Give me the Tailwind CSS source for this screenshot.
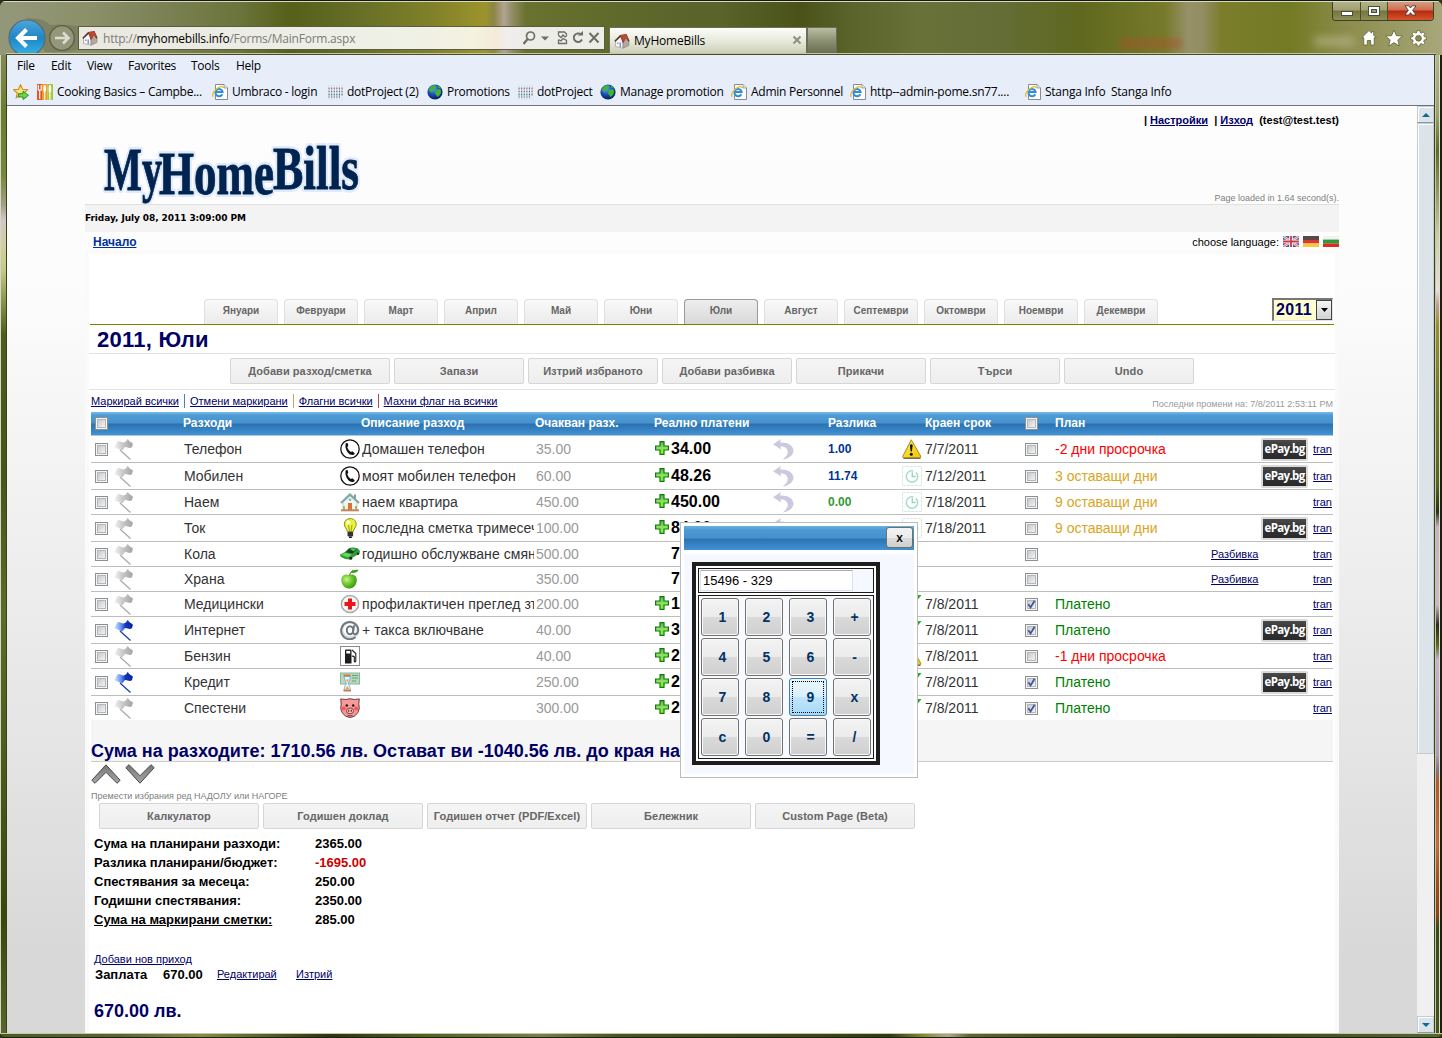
<!DOCTYPE html>
<html lang="bg">
<head>
<meta charset="utf-8">
<title>MyHomeBills</title>
<script src="https://cdn.jsdelivr.net/npm/@tailwindcss/browser@4"></script>
</head>
<body class="w-[1442px] h-[1038px] overflow-hidden bg-[#2c3310] font-['Liberation_Sans',Arial,sans-serif]">

<!-- shared icons -->
<svg class="absolute" width="0" height="0">
  <defs>
    <linearGradient id="gBack" x1="0" y1="0" x2="0" y2="1"><stop offset="0" stop-color="#4fa6dc"/><stop offset=".5" stop-color="#1f86c6"/><stop offset="1" stop-color="#37b4ea"/></linearGradient>
    <linearGradient id="gFlagGrey" x1="0" x2="1"><stop offset="0" stop-color="#f4f4f4"/><stop offset=".45" stop-color="#c9c9c9"/><stop offset="1" stop-color="#a2a2a2"/></linearGradient>
    <linearGradient id="gFlagBlue" x1="0" x2="1"><stop offset="0" stop-color="#dfe9ff"/><stop offset=".4" stop-color="#5c8af0"/><stop offset=".6" stop-color="#1238b8"/><stop offset="1" stop-color="#0a22a0"/></linearGradient>
    <linearGradient id="gBox" x1="0" y1="0" x2="1" y2="1"><stop offset="0" stop-color="#c3c7cc"/><stop offset="1" stop-color="#f6f6f6"/></linearGradient>
    <linearGradient id="gPlus" x1="0" y1="0" x2="0" y2="1"><stop offset="0" stop-color="#5fae50"/><stop offset=".5" stop-color="#8fe060"/><stop offset="1" stop-color="#7dfa18"/></linearGradient>
    <linearGradient id="gWarn" x1="0" y1="0" x2="1" y2="1"><stop offset="0" stop-color="#ffec50"/><stop offset="1" stop-color="#f2c500"/></linearGradient>
    <radialGradient id="gGlobe" cx=".4" cy=".3" r=".7"><stop offset="0" stop-color="#5aa6f0"/><stop offset=".6" stop-color="#1546a8"/><stop offset="1" stop-color="#071d5a"/></radialGradient>
    <radialGradient id="gApple" cx=".35" cy=".35" r=".7"><stop offset="0" stop-color="#c8f58a"/><stop offset=".5" stop-color="#6cc92c"/><stop offset="1" stop-color="#3a9413"/></radialGradient>
    <linearGradient id="gArrow" x1="0" y1="0" x2="0" y2="1"><stop offset="0" stop-color="#777"/><stop offset="1" stop-color="#a5a5a5"/></linearGradient>
  </defs>
  <symbol id="cb" viewBox="0 0 13 13"><rect x=".5" y=".5" width="12" height="12" fill="#f4f4f4" stroke="#8e8f8f"/><rect x="2.5" y="2.5" width="8" height="8" fill="url(#gBox)" stroke="#b4b8bd"/></symbol>
  <symbol id="cbOn" viewBox="0 0 13 13"><rect x=".5" y=".5" width="12" height="12" fill="#f4f4f4" stroke="#8e8f8f"/><rect x="2.5" y="2.5" width="8" height="8" fill="url(#gBox)" stroke="#b4b8bd"/><path d="M3.4 6.2 5.6 9.4 9.6 2.8" fill="none" stroke="#3f569c" stroke-width="1.8"/></symbol>
  <symbol id="flagGrey" viewBox="0 0 21 21"><path d="M7 11 17.5 20.5" stroke="#aaa" stroke-width="1.3"/><path d="M1 8 C3 7 3 2 6 2 C9 3 10 4 12 3 C14 2 14 0 15 0 C16 3 19 3 20 5 C19 6 20 9 17 9 C14 9 13 7 11 9 C10 12 8 12 6 10 C4 9 3 9 1 8Z" fill="url(#gFlagGrey)"/></symbol>
  <symbol id="flagBlue" viewBox="0 0 21 21"><path d="M7 11 17.5 20.5" stroke="#1c3fae" stroke-width="1.3"/><path d="M1 8 C3 7 3 2 6 2 C9 3 10 4 12 3 C14 2 14 0 15 0 C16 3 19 3 20 5 C19 6 20 9 17 9 C14 9 13 7 11 9 C10 12 8 12 6 10 C4 9 3 9 1 8Z" fill="url(#gFlagBlue)"/></symbol>
  <symbol id="plus" viewBox="0 0 14 14"><path d="M5 .6h4v4.4h4.4v4h-4.4v4.4h-4v-4.4h-4.4v-4h4.4z" fill="url(#gPlus)" stroke="#0f7a14" stroke-width="1.2"/></symbol>
  <symbol id="undo" viewBox="0 0 21 21"><path d="M0 5.2 8 0 7 3.6 C15 3.2 20 6.500 20.500 11.500 C20.500 16 15.500 20 9.500 20.500 C13.500 17.500 15.500 14.500 14.500 11.500 C13.500 8.500 11 7.500 7.500 7.300 L8.200 10.500Z" fill="#cbc9de"/></symbol>
  <symbol id="warn" viewBox="0 0 20 20"><path d="M9.300 .8 L18.700 17.200 Q19.200 18.800 17.500 18.800 L1.800 18.800 Q.3 18.800 .8 17.200Z" fill="url(#gWarn)" stroke="#a38a1a" stroke-width="1"/><path d="M1.500 19.300 H18.500" stroke="#5a5740" stroke-width="1"/><path d="M7.900 6 Q9.300 4.600 10.700 6 L9.900 12.500 H8.700Z" fill="#111"/><circle cx="9.300" cy="15.200" r="1.500" fill="#111"/></symbol>
  <symbol id="clock" viewBox="0 0 21 21"><rect x=".5" y=".5" width="20" height="20" fill="#fff" stroke="#cfe9de" stroke-dasharray="3 1"/><circle cx="10.500" cy="11" r="6" fill="none" stroke="#a8dcc6" stroke-width="1.600" stroke-dasharray="29 3"/><path d="M10.800 6.500V11H14.500" fill="none" stroke="#9ad6bd" stroke-width="1.500"/></symbol>
  <symbol id="tick" viewBox="0 0 21 21"><path d="M2 11 L7 18 L20.500 1 L17 1 L7.500 12 L5 9Z" fill="#1db32a"/></symbol>
  <symbol id="phone" viewBox="0 0 20 20"><circle cx="10" cy="10" r="9.200" fill="#fff" stroke="#111" stroke-width="1.300"/><path d="M5.600 4.600 Q6.500 3.400 7.800 4.200 L8.300 6.900 L7.200 8 Q8 11 10.800 12.900 L12.300 12.300 L14.700 14.200 Q14.700 15.800 13 16 Q9 16.200 6.500 11.500 Q4.800 7.500 5.600 4.600Z" fill="#111"/></symbol>
  <symbol id="house" viewBox="0 0 20 20"><path d="M3 10 10 4 17 10V18.500H3Z" fill="#f3f4f0" stroke="#a9b6b0" stroke-width=".6"/><path d="M1 11 10 2.500 19 11" fill="none" stroke="#74aaa2" stroke-width="2"/><rect x="14" y="2.500" width="2" height="4" fill="#89a"/><rect x="8" y="11" width="4" height="7.500" fill="#d8733a"/><circle cx="10" cy="7.800" r="1.300" fill="#7fb0c8"/><rect x="1" y="17.300" width="18" height="2" fill="#c8825a"/><path d="M4 14v4M16 14v4" stroke="#88b060" stroke-width="1.600"/></symbol>
  <symbol id="bulb" viewBox="0 0 20 20"><path d="M10.200 .6 C14 .6 16.200 3.200 16.200 6.200 C16.200 9.500 13.600 10.500 13.200 13.800 H7.400 C7 10.500 4.300 9.500 4.300 6.200 C4.300 3.200 6.600 .6 10.200 .6Z" fill="#e8f53a" stroke="#85931a" stroke-width="1"/><ellipse cx="8.200" cy="4.500" rx="2" ry="2.200" fill="#fbffc0"/><path d="M8.500 7 L9.500 13 M12 7 L11 13" stroke="#8f8c10" stroke-width=".8"/><rect x="7.500" y="13.800" width="5.600" height="4.600" rx="1" fill="#333"/><path d="M9 19.300h2.800" stroke="#111" stroke-width="1.400"/></symbol>
  <symbol id="car" viewBox="0 0 20 20"><path d="M0 10.500 L5 8 L9 4 Q14 3 18 4.500 L20 7 L19.500 9.500 L9.500 15.500 Q4 15.500 .5 12.500Z" fill="#2f9e38"/><path d="M5.500 8.300 L9.300 4.800 Q13 4 17 5 L12.500 9.800Z" fill="#174a22"/><path d="M1 10.700 L5.500 8.700 L12 10.500 L8 13.200Z" fill="#68d860"/><path d="M10 4.900 Q13 4.300 16 5 L13.700 7.200Z" fill="#63c968"/><circle cx="10.800" cy="14.200" r="1.500" fill="#222"/><circle cx="18" cy="9.700" r="1.200" fill="#222"/></symbol>
  <symbol id="apple" viewBox="0 0 20 20"><path d="M9 6 C12 4.500 16.800 5.800 16.800 11 C16.800 16 13 20 9.300 19.500 C5 20 1.300 15.500 1.300 11 C1.300 6 6 4.500 9 6Z" fill="url(#gApple)"/><path d="M9.500 6.500 Q10 3 13 1.200" fill="none" stroke="#5d7a1c" stroke-width="1"/><path d="M11 4 Q12 0 18.500 .8 Q17 4.500 11 4Z" fill="#3f9e22"/></symbol>
  <symbol id="med" viewBox="0 0 20 20"><circle cx="10" cy="10" r="8.600" fill="#f5f5f5" stroke="#a9a9a9" stroke-width="1.500"/><path d="M8 4.500h4v3.500h3.500v4h-3.500v3.500h-4v-3.500h-3.500v-4h3.500z" fill="#e8171c"/></symbol>
  <symbol id="at" viewBox="0 0 20 20"><g fill="none" stroke-linecap="round"><circle cx="9.800" cy="10" r="8" stroke="#d5d8db" stroke-width="3"/><path d="M15 17.500 A8.600 8.600 0 1 1 18.300 9.800 C18.300 13 16.500 14.300 14.600 14.200 C12.900 14 13 12.500 13.200 11 L14 6" stroke="#6f767d" stroke-width="1.900"/><ellipse cx="10" cy="10.300" rx="3.200" ry="4" stroke="#6f767d" stroke-width="2"/></g></symbol>
  <symbol id="fuel" viewBox="0 0 20 20"><rect x=".5" y=".5" width="19" height="19" fill="#fff" stroke="#8b8b8b"/><path d="M5 4.500Q5 3.500 6 3.500H10.500Q11.500 3.500 11.500 4.500V17.500H5Z" fill="#1d1d1d"/><rect x="6.300" y="4.900" width="3.900" height="2.600" fill="#fff"/><path d="M12 4 L15.800 7.500 V15 Q15.500 16.500 14.300 15.500 V11 Q14 10 12 10.200" fill="none" stroke="#1d1d1d" stroke-width="1.100"/></symbol>
  <symbol id="credit" viewBox="0 0 20 20"><rect x=".5" y="1" width="19" height="11" fill="#b5d9bf" stroke="#86b896"/><path d="M12 3.500h6M12 6h6M12 9h4" stroke="#6b9d7c" stroke-width="1"/><path d="M3.500 3.500H10.500M3.500 18.500H11" stroke="#d9763c" stroke-width="1.800"/><path d="M4.300 4.500 C4.300 9 6.300 10 6.300 11.200 C6.300 12.500 4.300 13.500 4.300 18 H10.200 C10.200 13.500 8.200 12.500 8.200 11.200 C8.200 10 10.200 9 10.200 4.500Z" fill="#eef5fb" stroke="#6f9cc8" stroke-width=".8"/><path d="M5 17.500 L7.200 14 L9.600 17.500Z M5.600 7.500H9L7.300 10Z" fill="#f0a63c"/></symbol>
  <symbol id="pig" viewBox="0 0 20 20"><path d="M.7 .9 L5.500 1.500 Q10 0 14.500 1.500 L19.300 .9 L18.800 6 Q20.300 11 17.800 14.800 Q14.500 19.500 10 19.500 Q5.500 19.500 2.200 14.800 Q-.3 11 1.200 6Z" fill="#f89a9a" stroke="#5e2c2c" stroke-width=".9"/><circle cx="6.800" cy="7.500" r="1.300" fill="#331515"/><circle cx="13.200" cy="7.500" r="1.300" fill="#331515"/><circle cx="3.800" cy="10.500" r="1.900" fill="#f2565a"/><circle cx="16.200" cy="10.500" r="1.900" fill="#f2565a"/><rect x="6.500" y="10.200" width="7" height="5.400" rx="2.500" fill="#fbb7b5" stroke="#6e2e2e" stroke-width=".8"/><path d="M8.700 11.800v2M11.300 11.800v2" stroke="#5e2323" stroke-width="1.100"/><path d="M7.500 17.300Q10 18.300 12.500 17.300" fill="none" stroke="#6e2e2e" stroke-width=".8"/></symbol>
  <symbol id="ie" viewBox="0 0 16 16"><path d="M3.500 .5H12l3.500 3.500V15.500H3.500Z" fill="#fff" stroke="#8a8a8a"/><path d="M12 .5V4H15.500" fill="#e8e8e8" stroke="#8a8a8a" stroke-width=".8"/><path d="M10.300 10.200 A3.600 3.600 0 1 1 10.600 7.900 H4" fill="none" stroke="#2c8fd8" stroke-width="2"/><path d="M1.200 12.800 C-.8 10.500 3 4.500 8 2.800 C10 2.200 11 2.800 10.900 4" fill="none" stroke="#e9b82d" stroke-width="1.300"/></symbol>
  <symbol id="globe" viewBox="0 0 16 16"><circle cx="8" cy="8" r="7.600" fill="url(#gGlobe)"/><path d="M4.500 2 Q8 .8 9.500 2.500 L8 5 L5.500 6 L4.500 8.500 L2 6.500 Q2 3.500 4.500 2Z M9 6 L13 5 Q15 7.500 13 11 L10.500 13 Q9 10.500 8 9.500Z M11 1.800 Q13.500 3 14 4.500 L11.500 4Z" fill="#3fb435"/></symbol>
  <symbol id="dots" viewBox="0 0 16 16"><g stroke-width="1.100" fill="none" stroke-dasharray="1.100 1.500"><path d="M.5 2H16" stroke="#cfcfcf"/><path d="M.5 4.500H16" stroke="#777" stroke-width="2"/><path d="M.5 7.500H16" stroke="#7d4a60" stroke-width="1.500"/><path d="M.5 10.500H16" stroke="#3f7a60" stroke-width="2"/><path d="M.5 13H12" stroke="#444" stroke-width="1.200"/><path d="M.5 15H16" stroke="#d5d5d5"/></g></symbol>
  <symbol id="home" viewBox="0 0 16 16"><path d="M1.500 7.500 L7 3.500 L9 10 L9 15.200 L1.500 13.500Z" fill="#f7f7fa" stroke="#8b8b9a" stroke-width=".6"/><path d="M9 15.200 V9.500 L12 5.500 L15 9 V12.500Z" fill="#b9a59a" stroke="#77706c" stroke-width=".5"/><path d="M.3 7.800 L6 2 L12.500 1 L15.700 8.200 L14.300 8.600 L12 5 L9 10.200 L6.600 4 L1.300 9Z" fill="#5a3a34"/><path d="M6.300 2.500 L12.300 1.300 L15 7 L12 4.800 L9.300 9Z" fill="#c3452e"/><path d="M3 9.500h1.500v1.500H3zM5.500 9.500h1.500v4.500H5.500z" fill="#8c93b8"/></symbol>
</svg>

<div class="relative flex h-[1038px] w-[1442px] flex-col">

  <!-- title bar -->
  <header class="relative flex h-[55px] w-full overflow-hidden rounded-t-[6px] border-t border-[#14170a] bg-[linear-gradient(90deg,#94987b_0px,#8b9069_90px,#7c8255_160px,#6b743a_240px,#566019_290px,#646c26_350px,#7f8029_430px,#9c932c_485px,#8d8545_494px,#b3a392_504px,#8f8a60_513px,#69722e_526px,#5f692b_620px,#59632a_720px,#4a5217_800px,#59632a_850px,#687138_920px,#646d35_1000px,#5f681e_1080px,#777a2b_1165px,#979169_1188px,#938d62_1202px,#7b7d2b_1222px,#737a24_1290px,#8d8d4e_1350px,#a7a77a_1442px)]">
    <div class="absolute inset-x-0 top-0 h-px bg-[#d9dcc4]"></div>
    <svg class="mt-[17px] ml-[6px] h-[37px] w-[72px] shrink-0" viewBox="6 18 72 37"><path d="M26 18 Q45 18 50 25 Q58 24 70 25 L78 26 V50 L66 52 H45Z" fill="#6f7356" fill-opacity=".55"/><circle cx="27" cy="38" r="18" fill="url(#gBack)" stroke="#586c72" stroke-width="1.200"/><path d="M37 38H19M26.500 29.500 18 38 26.500 46.500" fill="none" stroke="#fff" stroke-width="4"/><circle cx="62" cy="38" r="12.300" fill="#9c9f83" fill-opacity=".75" stroke="#5b5e45" stroke-width="1.300"/><path d="M55 38H68M63 32.500 68.500 38 63 43.500" fill="none" stroke="#dcddd0" stroke-width="2.600"/></svg>
    <div class="mt-[25px] flex h-[24px] w-[527px] shrink-0 items-center border border-[#5a5d44] bg-[linear-gradient(90deg,#e9e9e2_0px,#eff0e6_330px,#f4f2e0_395px,#f5ead9_418px,#f1eeee_428px,#ecede6_450px,#ecede6_527px)] pl-[3px]">
      <svg class="size-4"><use href="#home"/></svg>
      <span class="mt-[2px] ml-[5px] w-[420px] font-['Open_Sans',sans-serif] text-[12px] leading-4 tracking-[-0.23px] whitespace-nowrap text-[#7c7c78]">http://<span class="text-black">myhomebills.info</span>/Forms/MainForm.aspx</span>
      <svg class="h-4 w-[80px]" viewBox="0 0 80 16" fill="none" stroke="#6d6e69" stroke-width="1.700"><circle cx="7.500" cy="6" r="4"/><path d="M4.600 9 .5 14" stroke-width="2.200"/><path d="M18 6.500H26L22 10.500Z" fill="#6d6e69" stroke="none"/><path d="M35.500 5.500V2H41.500L43.500 4V6M35.500 5.500 38 7.500 40 5 42 7 43.500 6M35.500 10V13.500H43.500V10.500L40 8.500 38 11 35.500 9.500" stroke-width="1.300"/><path d="M58 4.500A4.300 4.300 0 1 0 59 9.500" stroke-width="1.900"/><path d="M54.500 5.500H60V1Z" fill="#6d6e69" stroke="none"/><path d="M66.500 3 75.500 12.500M75.500 3 66.500 12.500" stroke-width="2"/></svg>
    </div>
    <div class="mt-[26px] ml-[4px] flex h-[28px] w-[198px] shrink-0 items-center border border-b-0 border-[#6b6e58] bg-[linear-gradient(180deg,#fdfdfa,#e4e6d6_55%,#c6cab0)] pl-[4px]">
      <svg class="-mt-px size-4"><use href="#home"/></svg>
      <span class="-mt-px ml-[4px] w-[160px] font-['Open_Sans',sans-serif] text-[12px] leading-4 tracking-[-0.2px] text-black">MyHomeBills</span>
      <svg class="-mt-[3px] -ml-[2px] size-[10px]" viewBox="0 0 10 10"><path d="M1.500 1.500 8.500 8.500M8.500 1.500 1.500 8.500" stroke="#8d8f84" stroke-width="2"/></svg>
    </div>
    <div class="mt-[26px] h-[28px] w-[30px] shrink-0 border border-b-0 border-[#6b6e58] bg-[linear-gradient(180deg,#b9bda3,#8a8e70_50%,#666a4c)]"></div>
    <div class="ml-auto flex flex-col items-end pr-[8px]">
      <div class="flex h-[20px] w-[102px] overflow-hidden rounded-b-[4px] border border-t-0 border-[#3f4222]">
        <div class="flex w-[28px] items-center justify-center border-r border-[#4b4d30] bg-[linear-gradient(180deg,#b5b58c,#a0a070_48%,#75763c_52%,#8e8e58)]"><div class="mt-[5px] h-[5px] w-[12px] border border-[#4a4c40] bg-white"></div></div>
        <div class="flex w-[27px] items-center justify-center border-r border-[#4b4d30] bg-[linear-gradient(180deg,#b5b58c,#a0a070_48%,#75763c_52%,#8e8e58)]"><svg class="h-[10px] w-[12px]" viewBox="0 0 12 10"><rect x=".5" y=".5" width="11" height="9" fill="#fff" stroke="#4a4c40"/><rect x="3.500" y="3.500" width="5" height="3" fill="#999a70" stroke="#4a4c40"/></svg></div>
        <div class="flex flex-1 items-center justify-center bg-[linear-gradient(180deg,#d9a087,#cc6d50_48%,#b5290e_52%,#d4552c)]"><svg class="h-[11px] w-[13px]" viewBox="0 0 13 11"><path d="M1 .8H4.700L6.500 3 8.300 .8H12L8.700 5.300 12 10H8.300L6.500 7.700 4.700 10H1L4.300 5.300Z" fill="#fff" stroke="#4b3a3a" stroke-width=".9"/></svg></div>
      </div>
      <svg class="mt-[8px] mr-[7px] h-[18px] w-[66px]" viewBox="0 0 66 18" fill="#fff" stroke="#555828" stroke-width=".7"><path d="M8 1.500 0.800 8.700H2.800V16H6.300V11.500H9.700V16H13.200V8.700H15.200L12.700 6.200V2.500H10.700V4.200Z"/><path d="M33 1 35.400 6.700 41.500 7 36.800 10.900 38.300 17 33 13.600 27.700 17 29.200 10.900 24.500 7 30.600 6.700Z"/><path d="M56.200 1.500h2.600l.3 2 1.300.6 1.700-1.200 1.800 1.800-1.200 1.700.6 1.300 2 .3v2.600l-2 .3-.6 1.300 1.200 1.700-1.800 1.800-1.700-1.200-1.300.6-.3 2h-2.600l-.3-2-1.300-.6-1.700 1.200-1.800-1.800 1.200-1.700-.6-1.300-2-.3V8l2-.3.6-1.300-1.200-1.700 1.800-1.800 1.700 1.200 1.300-.6Z"/><circle cx="57.500" cy="9.300" r="2.900" fill="#8b8c50"/></svg>
    </div>
    <div class="absolute inset-x-[6px] bottom-0 h-px bg-[#474c22]"></div>
    <div class="absolute inset-x-[6px] bottom-px h-px bg-[#c3c6a6]"></div>
    <div class="absolute top-[38px] left-[1120px] h-[9px] w-[62px] bg-[#b0502c]/50 blur-[3px]"></div>
    <div class="absolute top-[36px] left-[1314px] h-[9px] w-[40px] bg-[#cfc9a8]/50 blur-[4px]"></div>
  </header>

  <div class="flex h-[978px] w-full">
    <!-- left glass edge -->
    <div class="flex w-[7px] shrink-0 border-l border-[#d5d8c0] bg-[linear-gradient(180deg,#838a58_0px,#6c7c30_60px,#77863e_120px,#a3a085_150px,#d5c6c8_165px,#d3cfa0_190px,#c5c98a_215px,#8b9650_245px,#4d5c1f_280px,#46551b_420px,#5d6b2a_560px,#4a5a1d_720px,#39470f_860px,#58652c_978px)]"><div class="ml-auto w-px bg-[#3a4218]"></div></div>

    <!-- client area -->
    <div class="flex w-[1427px] shrink-0 flex-col">
      <div class="h-[51px] border-b border-[#6f7278] bg-[#e7eefa] font-['Open_Sans',sans-serif] text-[12px] leading-[22px] whitespace-nowrap text-black">
        <nav class="flex h-[23px] pl-[10px] tracking-[-0.3px]">
          <span class="w-[34px]">File</span><span class="w-[36px]">Edit</span><span class="w-[41px]">View</span><span class="w-[63px]">Favorites</span><span class="w-[45px]">Tools</span><span>Help</span>
        </nav>
        <nav class="flex h-[27px] items-center pl-[6px] tracking-[-0.25px]">
          <span class="w-[24px]"><svg class="size-4" viewBox="0 0 16 16"><path d="M7.500 .8 9.600 5.300 14.500 5.800 10.900 9 11.900 13.800 7.500 11.400 3.200 13.800 4.200 9 .6 5.800 5.500 5.300Z" fill="#fbe27a" stroke="#c88d1b" stroke-width="1.100"/><path d="M5.500 9.700H10V7.200L15.500 11.300 10 15.500V13H5.500Z" fill="#6fd44c" stroke="#1f8a1c" stroke-width=".9"/></svg></span>
          <span class="flex w-[175px] items-center"><svg class="mr-[4px] size-4 shrink-0" viewBox="0 0 16 16"><rect width="5" height="16" fill="#e2552b"/><rect x="5" width="5.500" height="16" fill="#f59a1e"/><rect x="10.500" width="5.500" height="16" fill="#a7c83c"/><path d="M1.300 1v5h2.900V1M2.700 6v9M7.700 16V8M12.900 16V9" stroke="#fff" stroke-width="1.200" fill="none"/><ellipse cx="7.700" cy="4.500" rx="1.500" ry="3.500" fill="#fff"/><ellipse cx="12.900" cy="5" rx="1.300" ry="4" fill="#fff"/></svg>Cooking Basics – Campbe...</span>
          <span class="flex w-[116px] items-center"><svg class="mr-[4px] size-4 shrink-0"><use href="#ie"/></svg>Umbraco - login</span>
          <span class="flex w-[99px] items-center"><svg class="mr-[3px] size-4 shrink-0"><use href="#dots"/></svg>dotProject (2)</span>
          <span class="flex w-[91px] items-center"><svg class="mr-[4px] size-4 shrink-0"><use href="#globe"/></svg>Promotions</span>
          <span class="flex w-[82px] items-center"><svg class="mr-[3px] size-4 shrink-0"><use href="#dots"/></svg>dotProject</span>
          <span class="flex w-[131px] items-center"><svg class="mr-[4px] size-4 shrink-0"><use href="#globe"/></svg>Manage promotion</span>
          <span class="flex w-[119px] items-center"><svg class="mr-[4px] size-4 shrink-0"><use href="#ie"/></svg>Admin Personnel</span>
          <span class="flex w-[175px] items-center"><svg class="mr-[4px] size-4 shrink-0"><use href="#ie"/></svg>http--admin-pome.sn77....</span>
          <span class="flex w-[86px] items-center"><svg class="mr-[4px] size-4 shrink-0"><use href="#ie"/></svg>Stanga Info</span>
          <span>Stanga Info</span>
        </nav>
      </div>

      <div class="flex h-[927px]">
        <!-- page -->
        <main class="w-[1410px] shrink-0 bg-[linear-gradient(180deg,#fdfdfd_0px,#fcfcfc_180px,#f1f1f1_400px,#e4e4e4_650px,#d8d8d8_850px,#d8d8d8_927px)] pl-[78px]">
          <div class="flex h-[927px] w-[1254px] flex-col">
            <div class="flex h-[98px] justify-between">
              <svg class="mt-[30px] ml-[14px] h-[68px] w-[270px] overflow-visible" viewBox="99 136 270 68" font-family="'Liberation Serif',serif" font-weight="bold" font-size="61" stroke-linejoin="round">
                <g fill="#dfeafc" stroke="#dfeafc" stroke-width="6">
                  <text x="104" y="190" textLength="58" lengthAdjust="spacingAndGlyphs">My</text><text x="159" y="194" textLength="115" lengthAdjust="spacingAndGlyphs">Home</text><text x="273" y="189" textLength="86" lengthAdjust="spacingAndGlyphs">Bills</text>
                </g>
                <g fill="#00234f" stroke="#00234f" stroke-width=".9">
                  <text x="104" y="190" textLength="58" lengthAdjust="spacingAndGlyphs">My</text><text x="159" y="194" textLength="115" lengthAdjust="spacingAndGlyphs">Home</text><text x="273" y="189" textLength="86" lengthAdjust="spacingAndGlyphs">Bills</text>
                </g>
              </svg>
              <div class="flex flex-col items-end justify-between pt-[8px]">
                <div class="text-[11px] leading-[13px] font-bold whitespace-pre text-black">| <a class="text-[#000066] underline">Настройки</a>  | <a class="text-[#000066] underline">Изход</a>  (test@test.test)</div>
                <div class="text-[9px] leading-[12px] text-[#808080]">Page loaded in 1.64 second(s).</div>
              </div>
            </div>
            <div class="flex h-[28px] items-center border-t border-[#e0e0e0] bg-[#f3f3f3] pt-px font-['DejaVu_Sans',sans-serif] text-[9px] font-bold tracking-[-0.08px] text-black">Friday, July 08, 2011 3:09:00 PM</div>
            <div class="flex h-[18px] items-center justify-between bg-[#fdfdfd] pt-[2px] pl-[8px]">
              <a class="text-[12px] leading-[15px] font-bold text-[#003399] underline">Начало</a>
              <div class="flex items-center text-[11px] leading-[13px] text-black"><span>choose language:</span>
                <svg class="ml-[4px] h-[11px] w-[56px] -translate-y-[1px]" viewBox="0 0 56 11"><rect width="16" height="11" fill="#4a5a98"/><path d="M0 0 16 11M16 0 0 11" stroke="#f0dfe4" stroke-width="2.400"/><path d="M0 0 16 11M16 0 0 11" stroke="#d05a68" stroke-width=".8"/><path d="M8 0V11M0 5.500H16" stroke="#fff" stroke-width="3.600"/><path d="M8 0V11M0 5.500H16" stroke="#c83a48" stroke-width="1.800"/><rect x="20" width="16" height="4" fill="#5a4a46"/><rect x="20" y="4" width="16" height="3.500" fill="#d83a30"/><rect x="20" y="7.500" width="16" height="3.500" fill="#f6c83e"/><rect x="40" width="16" height="4" fill="#f2f2f2"/><rect x="40" y="3.600" width="16" height="4" fill="#2f9a3a"/><rect x="40" y="7.500" width="16" height="3.500" fill="#dc2c24"/></svg>
              </div>
            </div>

            <div class="flex h-[783px] flex-col overflow-hidden border-x-4 border-t-4 border-[#fafafa] bg-white">
              <!-- months -->
              <div class="mx-px mt-[44px] flex h-[27px] shrink-0 items-end border-b border-[#808000] pl-[114px]">
                <div id="months" class="flex gap-[6px]"></div>
                <div class="mr-px mb-[3px] ml-auto flex h-[23px] w-[61px] border border-t-2 border-l-2 border-[#e4e4e4] border-t-[#777] border-l-[#777] bg-[#ffffcc]">
                  <span class="flex-1 pl-[2px] text-[16px] leading-[20px] font-bold tracking-[0.3px] text-[#000066]">2011</span>
                  <span class="flex w-[16px] items-center justify-center border border-[#444] bg-[linear-gradient(180deg,#f5f5f5,#d2d2d2)]"><svg class="h-[4px] w-[7px]" viewBox="0 0 7 4"><path d="M0 0H7L3.500 4Z" fill="#000"/></svg></span>
                </div>
              </div>
              <h1 class="h-[29px] shrink-0 border-b border-[#e3e3e3] pl-[8px] text-[22px] leading-[29px] font-bold tracking-[0.25px] text-[#000066]">2011, Юли</h1>
              <div id="actions" class="flex h-[36px] shrink-0 justify-center gap-[4px] border-b border-[#e3e3e3] pt-[4px]"></div>
              <div class="flex h-[22px] shrink-0 justify-between pr-[2px] pl-[2px]">
                <div class="flex h-[22px] items-center text-[11px] leading-[13px] text-[#000066]">
                  <a class="underline">Маркирай всички</a><i class="mx-[5px] h-[14px] w-px bg-[#4a7fc0]"></i><a class="underline">Отмени маркирани</a><i class="mx-[5px] h-[14px] w-px bg-[#c9a45a]"></i><a class="underline">Флагни всички</a><i class="mx-[5px] h-[14px] w-px bg-[#b04a4a]"></i><a class="underline">Махни флаг на всички</a>
                </div>
                <div class="pt-[8px] text-[9px] leading-[12px] tracking-[0.03px] text-[#999]">Последни промени на: 7/8/2011 2:53:11 PM</div>
              </div>
              <!-- bills table -->
              <div class="mx-[2px] grid h-[24px] shrink-0 grid-cols-[21px_71px_157px_22px_173px_119px_17px_102px_55px_74px_23px_100px_30px_1fr] items-center border-b border-[#b9c6d2] bg-[linear-gradient(180deg,#7cc0ea_0px,#4f9bd4_3px,#4592cf_11px,#2d70ae_12px,#3580c0_17px,#3f93d8_23px)] text-[12px] leading-[20px] font-bold whitespace-nowrap text-white">
                <svg class="ml-[4px] size-[13px]"><use href="#cb"/></svg><span></span><span class="-translate-y-px">Разходи</span><span class="col-span-2 -translate-y-px pl-[21px]">Описание разход</span><span class="-translate-y-px">Очакван разх.</span><span class="col-span-3 -translate-y-px">Реално платени</span><span class="-translate-y-px">Разлика</span><span></span><span class="-translate-y-px">Краен срок</span><svg class="size-[13px]"><use href="#cb"/></svg><span class="-translate-y-px">План</span>
              </div>
              <div id="bills" class="mx-[2px] shrink-0"></div>
              <div class="mx-[2px] h-[42px] shrink-0 border-b border-[#ccc] bg-[#f5f5f5] pt-[21px] text-[18px] leading-[20px] font-bold whitespace-nowrap text-[#000066]">Сума на разходите: 1710.56 лв. Остават ви -1040.56 лв. до края на</div>
              <div class="mx-[2px] flex shrink-0 gap-[4px] pt-[2px]">
                <svg class="h-[20px] w-[30px]" viewBox="0 0 30 20"><path d="M.8 16.300 15 .8 29.200 16.300 26 19.300 15 8.300 4 19.300Z" fill="url(#gArrow)" stroke="#484848" stroke-width="1"/></svg>
                <svg class="h-[20px] w-[30px]" viewBox="0 0 30 20"><path d="M.8 3.700 15 19.200 29.200 3.700 26 .7 15 11.700 4 .7Z" fill="url(#gArrow)" stroke="#484848" stroke-width="1"/></svg>
              </div>
              <div class="mt-[6px] ml-[2px] h-[13px] shrink-0 text-[9px] leading-[12px] text-[#808080]">Премести избрания ред НАДОЛУ или НАГОРЕ</div>
              <div id="tools" class="flex shrink-0 gap-[4px] pl-[10px]"></div>
              <dl class="mt-[5px] ml-[5px] grid shrink-0 grid-cols-[221px_1fr] text-[13px] leading-[19px] font-bold text-black">
                <dt>Сума на планирани разходи:</dt><dd>2365.00</dd>
                <dt>Разлика планирани/бюджет:</dt><dd class="text-[#cc0000]">-1695.00</dd>
                <dt>Спестявания за месеца:</dt><dd>250.00</dd>
                <dt>Годишни спестявания:</dt><dd>2350.00</dd>
                <dt class="underline">Сума на маркирани сметки:</dt><dd>285.00</dd>
              </dl>
              <a class="mt-[24px] ml-[5px] shrink-0 text-[11px] leading-[13px] text-[#000066] underline">Добави нов приход</a>
              <div class="ml-[6px] flex h-[17px] shrink-0 items-center text-[13px] font-bold text-black"><span class="w-[68px]">Заплата</span><span class="w-[54px]">670.00</span><a class="w-[79px] text-[11px] font-normal text-[#000066] underline">Редактирай</a><a class="text-[11px] font-normal text-[#000066] underline">Изтрий</a></div>
              <div class="mt-[18px] ml-[5px] shrink-0 text-[18px] leading-[21px] font-bold text-[#000066]">670.00 лв.</div>
            </div>
          </div>
        </main>

        <!-- scrollbar -->
        <div class="flex w-[17px] shrink-0 flex-col bg-[#f0f0f0]">
          <div class="flex h-[17px] items-center justify-center border border-[#c3ccd2] border-b-[#7f9dab] bg-[#dde4e9] shadow-[inset_1px_1px_0_#fff]"><svg class="h-[4px] w-[8px]" viewBox="0 0 8 4"><path d="M0 4H8L4 0Z" fill="#0b6b9c"/></svg></div>
          <div class="h-[631px] border border-[#c3ccd2] bg-[#dde4e9] shadow-[inset_1px_1px_0_#fff]"></div>
          <div class="mt-auto flex h-[17px] items-center justify-center border border-[#c3ccd2] border-b-[#7f9dab] bg-[#dde4e9] shadow-[inset_1px_1px_0_#fff]"><svg class="h-[4px] w-[8px]" viewBox="0 0 8 4"><path d="M0 0H8L4 4Z" fill="#0b6b9c"/></svg></div>
        </div>
      </div>
    </div>

    <!-- right glass edge -->
    <div class="flex flex-1 border-r-2 border-r-[#1c2010] bg-[linear-gradient(180deg,#b3b58b_0px,#9ba06c_60px,#5c6a2b_95px,#8b915a_130px,#c9cda8_180px,#e8dede_235px,#c79c94_250px,#9c9030_270px,#78802a_330px,#55651f_430px,#28301a_457px,#c8b2c2_472px,#ceb8c8_550px,#2b2a20_570px,#586722_590px,#c9b3cc_605px,#b09ab4_700px,#8a7480_715px,#b85a28_728px,#c46a3c_790px,#a34a1a_830px,#8f4718_860px,#3c4a15_873px,#46551c_978px)]"><div class="w-px bg-[#3a4218]"></div><div class="w-px bg-[#c3c6b0]"></div><div class="ml-auto w-px bg-[#dfe0d4]"></div></div>
  </div>
  <!-- bottom glass edge -->
  <footer class="h-[5px] rounded-b-[5px] border-t border-b border-t-[#c3c8a6] border-b-[#1d2210] bg-[linear-gradient(90deg,#4b5a20_0px,#5b652d_120px,#8a8a48_200px,#5b6627_260px,#2c3310_330px,#50611d_420px,#7b7f45_540px,#48551b_620px,#3c4714_820px,#303a12_890px,#8d8b32_925px,#b3a48e_948px,#5d662b_970px,#465217_1050px,#3d4a15_1250px,#5b6530_1442px)]"></footer>

  <!-- calculator dialog -->
  <section class="absolute top-[522px] left-[680px] flex h-[256px] w-[238px] flex-col border border-[#bdbdbd] bg-white p-[3px]">
    <div class="flex h-[24px] shrink-0 justify-end bg-[linear-gradient(180deg,#6ab2e2_0px,#4d98d2_4px,#4592cf_12px,#2f72b0_13px,#3580c0_18px,#3f93d8_24px)]">
      <button class="mt-px mr-px h-[21px] w-[27px] rounded-[3px] border border-[#707070] bg-[linear-gradient(180deg,#f3f3f3,#ebebeb_50%,#dcdcdc_51%,#cfcfcf)] font-['Open_Sans',sans-serif] text-[12px] leading-[18px] font-semibold text-black">x</button>
    </div>
    <div class="mt-[4px] h-[220px] bg-[#f5f9ff] pt-[8px] pl-[8px]">
      <div class="flex h-[203px] w-[188px] flex-col gap-[2px] border-4 border-[#1d1f1f] bg-white p-[2px]">
        <div class="h-[25px] shrink-0 border border-[#1a1a1a] bg-[#f5f9ff] p-px"><div class="h-[21px] w-[153px] border border-[#dce0ea] border-t-[#abadb3] bg-white pl-[2px] text-[13px] leading-[19px] text-black">15496 - 329</div></div>
        <div id="keys" class="grid h-[164px] shrink-0 grid-cols-4 content-start gap-x-[6px] gap-y-[2px] border border-[#1a1a1a] bg-[#f7faff] p-[2px]"></div>
      </div>
    </div>
  </section>
</div>

<script>
const q = id => document.getElementById(id);
q('months').innerHTML = ['Януари','Февруари','Март','Април','Май','Юни','Юли','Август','Септември','Октомври','Ноември','Декември'].map(m =>
  `<div class="h-[25px] w-[74px] rounded-t-[4px] border border-b-0 ${m === 'Юли' ? 'border-[#9a9a9a] bg-[linear-gradient(180deg,#eeeeee,#d8d8d8)]' : 'border-[#e0e0e0] bg-[linear-gradient(180deg,#f9f9f9,#ebebeb)]'} text-center text-[10px] leading-[22px] font-bold text-[#666]">${m}</div>`).join('');
const button = (t, w) => `<button class="h-[26px] shrink-0 rounded-[2px] border border-[#d6d6d6] bg-[linear-gradient(180deg,#f5f5f5,#eeeeee)] text-[11px] leading-[24px] font-bold tracking-[0.06px] text-[#666] ${w}">${t}</button>`;
q('actions').innerHTML = button('Добави разход/сметка', 'w-[160px]') + ['Запази','Изтрий избраното','Добави разбивка','Прикачи','Търси','Undo'].map(t => button(t, 'w-[130px]')).join('');
q('tools').innerHTML = ['Калкулатор','Годишен доклад','Годишен отчет (PDF/Excel)','Бележник','Custom Page (Beta)'].map(t => button(t, 'w-[160px]')).join('');

const late = 'text-[#ff0000]', due = 'text-[#daa520]', paid = 'text-[#008000]';
// name, icon, description, expected, plus, actual, difference, status, date, checked, plan, plan colour, split, ePay, flagged, height
const bills = [
  ['Телефон','phone','Домашен телефон','35.00',1,'34.00','1.00','warn','7/7/2011',0,'-2 дни просрочка',late,0,1,0,'h-[27px]'],
  ['Мобилен','phone','моят мобилен телефон','60.00',1,'48.26','11.74','clock','7/12/2011',0,'3 оставащи дни',due,0,1,0,'h-[27px]'],
  ['Наем','house','наем квартира','450.00',1,'450.00','0.00','clock','7/18/2011',0,'9 оставащи дни',due,0,0,0,'h-[25px]'],
  ['Ток','bulb','последна сметка тримесеч','100.00',1,'84.00','','clock','7/18/2011',0,'9 оставащи дни',due,0,1,0,'h-[27px]'],
  ['Кола','car','годишно обслужване смян','500.00',0,'7','','','',0,'','',1,0,0,'h-[25px]'],
  ['Храна','apple','','350.00',0,'7','','','',0,'','',1,0,0,'h-[25px]'],
  ['Медицински','med','профилактичен преглед зъ','200.00',1,'1','','tick','7/8/2011',1,'Платено',paid,0,0,0,'h-[25px]'],
  ['Интернет','at','+ такса включване','40.00',1,'3','','tick','7/8/2011',1,'Платено',paid,0,1,1,'h-[27px]'],
  ['Бензин','fuel','','40.00',1,'2','','warn','7/8/2011',0,'-1 дни просрочка',late,0,0,0,'h-[25px]'],
  ['Кредит','credit','','250.00',1,'2','','tick','7/8/2011',1,'Платено',paid,0,1,1,'h-[27px]'],
  ['Спестени','pig','','300.00',1,'2','','tick','7/8/2011',1,'Платено',paid,0,0,0,'h-[24px] border-b-0'],
];
q('bills').innerHTML = bills.map(([n,ic,d,e,p,a,df,st,dt,on,pl,pc,sp,ep,fl,h]) => `
<div class="grid ${h} grid-cols-[21px_71px_157px_22px_173px_119px_17px_102px_55px_74px_23px_100px_30px_156px_50px_52px_20px] items-center border-b border-[#bdbdbd] text-[14px] leading-[20px] whitespace-nowrap text-[#333]">
  <svg class="ml-[4px] size-[13px]"><use href="#cb"/></svg>
  <svg class="ml-px size-[21px]"><use href="#${fl ? 'flagBlue' : 'flagGrey'}"/></svg>
  <span class="pl-px">${n}</span>
  <svg class="size-[20px]"><use href="#${ic}"/></svg>
  <span class="w-[172px] overflow-hidden tracking-[0.05px]">${d}</span>
  <span class="pl-px text-[#999]">${e}</span>
  ${p ? '<svg class="ml-px size-[14px] -translate-y-px"><use href="#plus"/></svg>' : '<span></span>'}
  <span class="text-[16px] font-bold text-black">${a}</span>
  ${p ? '<svg class="size-[21px]"><use href="#undo"/></svg>' : '<span></span>'}
  <span class="text-[12px] font-bold ${df === '0.00' ? 'text-[#339933]' : 'text-[#003399]'}">${df}</span>
  ${st ? `<svg class="size-[20px]"><use href="#${st}"/></svg>` : '<span></span>'}
  <span>${dt}</span>
  <svg class="size-[13px]"><use href="#${on ? 'cbOn' : 'cb'}"/></svg>
  <span class="${pc}">${pl}</span>
  <a class="text-[11px] text-[#000066] underline">${sp ? 'Разбивка' : ''}</a>
  ${ep ? `<span class="h-[23px] w-[47px] rounded-[2px] border-2 border-[#d9d9d9] bg-[linear-gradient(180deg,#4a4a4a,#333_50%,#2a2a2a)] text-center font-['Open_Sans',sans-serif] text-[11.5px] leading-[17px] font-bold tracking-[-0.65px] text-white">ePay.bg</span>` : '<span></span>'}
  <a class="text-[11px] text-[#000066] underline">tran</a>
</div>`).join('');

q('keys').innerHTML = ['1','2','3','+','4','5','6','-','7','8','9','x','c','0','=','/'].map(k =>
  `<button class="relative h-[38px] w-[38px] rounded-[3px] border pl-[5px] text-[14px] leading-[36px] font-bold text-[#003366] ${k === '9' ? 'border-[#3c7fb1] bg-[linear-gradient(180deg,#eaf6fd,#d9f0fc_50%,#bee6fd_51%,#a7d9f5)]' : 'border-[#707070] bg-[linear-gradient(180deg,#f3f3f3,#ebebeb_50%,#dadada_51%,#cfcfcf)] shadow-[inset_0_0_0_1px_#fafafa]'}">${k}${k === '9' ? '<i class="absolute inset-[2px] border border-dotted border-black"></i>' : ''}</button>`).join('');
</script>
</body>
</html>
